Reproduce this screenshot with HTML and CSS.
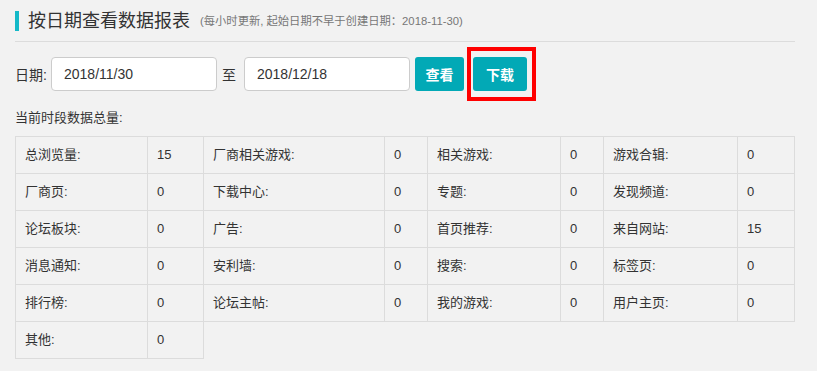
FILE: index.html
```html
<!DOCTYPE html>
<html lang="zh-CN">

<head>
    <meta charset="UTF-8" />
    <meta name="viewport" content="width=device-width, initial-scale=1" />
    <title>按日期查看数据报表</title>
    <link rel="stylesheet" href="styles.css">
</head>

<body>

    <!-- Heading -->
    <div class="report-head">
        <h2 class="report-title">按日期查看数据报表</h2>
        <span class="report-note">(每小时更新, 起始日期不早于创建日期：2018-11-30)</span>
    </div>

    <!-- Date filter -->
    <div class="filter-row">
        <label class="filter-label">日期:</label>
        <input class="date-input" type="text" value="2018/11/30">
        <span class="filter-to">至</span>
        <input class="date-input" type="text" value="2018/12/18">
        <button class="btn">查看</button>
        <span class="highlight">
            <button class="btn">下载</button>
        </span>
    </div>

    <div class="total-label">当前时段数据总量:</div>

    <!-- Stats table -->
    <table class="stats">
        <colgroup>
            <col style="width: 132px">
            <col style="width: 56px">
            <col style="width: 181px">
            <col style="width: 43px">
            <col style="width: 133px">
            <col style="width: 43px">
            <col style="width: 134px">
            <col style="width: 57px">
        </colgroup>
        <tr>
            <td>总浏览量:</td><td>15</td>
            <td>厂商相关游戏:</td><td>0</td>
            <td>相关游戏:</td><td>0</td>
            <td>游戏合辑:</td><td>0</td>
        </tr>
        <tr>
            <td>厂商页:</td><td>0</td>
            <td>下载中心:</td><td>0</td>
            <td>专题:</td><td>0</td>
            <td>发现频道:</td><td>0</td>
        </tr>
        <tr>
            <td>论坛板块:</td><td>0</td>
            <td>广告:</td><td>0</td>
            <td>首页推荐:</td><td>0</td>
            <td>来自网站:</td><td>15</td>
        </tr>
        <tr>
            <td>消息通知:</td><td>0</td>
            <td>安利墙:</td><td>0</td>
            <td>搜索:</td><td>0</td>
            <td>标签页:</td><td>0</td>
        </tr>
        <tr>
            <td>排行榜:</td><td>0</td>
            <td>论坛主帖:</td><td>0</td>
            <td>我的游戏:</td><td>0</td>
            <td>用户主页:</td><td>0</td>
        </tr>
        <tr>
            <td>其他:</td><td>0</td>
        </tr>
    </table>

</body>

</html>
```

FILE: styles.css
```css
body {
    font-family: 'Liberation Sans', 'Noto Sans CJK SC', sans-serif;
    background-color: #f2f2f2;
    color: #333;
    margin: 0;
    padding: 0 15px;
    font-size: 13px;
}

.report-head {
    display: flex;
    align-items: center;
    padding-top: 11px;
    padding-bottom: 10px;
    border-bottom: 1px solid #dcdcdc;
    width: 780px;
}

.report-title {
    margin: 0;
    font-size: 18px;
    font-weight: normal;
    line-height: 20px;
    height: 20px;
    border-left: 4px solid #14b9c8;
    padding-left: 9px;
    color: #333;
}

.report-note {
    font-size: 11.3px;
    color: #777;
    margin-left: 10px;
    line-height: 20px;
}

.filter-row {
    display: flex;
    align-items: center;
    margin-top: 5px;
    height: 54px;
}

.filter-label {
    font-size: 14px;
    width: 36px;
}

.date-input {
    width: 166px;
    height: 34px;
    box-sizing: border-box;
    border: 1px solid #ccc;
    border-radius: 4px;
    background-color: #fff;
    padding: 0 12px;
    font-family: inherit;
    font-size: 14px;
    color: #333;
    outline: none;
}

.filter-to {
    font-size: 14px;
    margin: 0 8px 0 5px;
}

.btn {
    width: 49px;
    height: 34px;
    margin-left: 5px;
    border: none;
    border-radius: 3px;
    background-color: #02a9b6;
    color: #fff;
    font-family: inherit;
    font-size: 14px;
    font-weight: bold;
    cursor: pointer;
}

.btn:hover {
    opacity: 0.85;
}

.highlight {
    display: flex;
    margin-left: 3px;
    border: 4px solid #ff0000;
    padding: 6px 5px 6px 2px;
}

.highlight .btn {
    width: 54px;
    margin-left: 0;
}

.total-label {
    margin-top: 7px;
    line-height: 20px;
    height: 20px;
}

.stats {
    margin-top: 8px;
    border-collapse: collapse;
    table-layout: fixed;
    width: 779px;
}

.stats td {
    border: 1px solid #dcdcdc;
    height: 37px;
    padding: 0 9px;
    line-height: 20px;
    box-sizing: border-box;
}
```
